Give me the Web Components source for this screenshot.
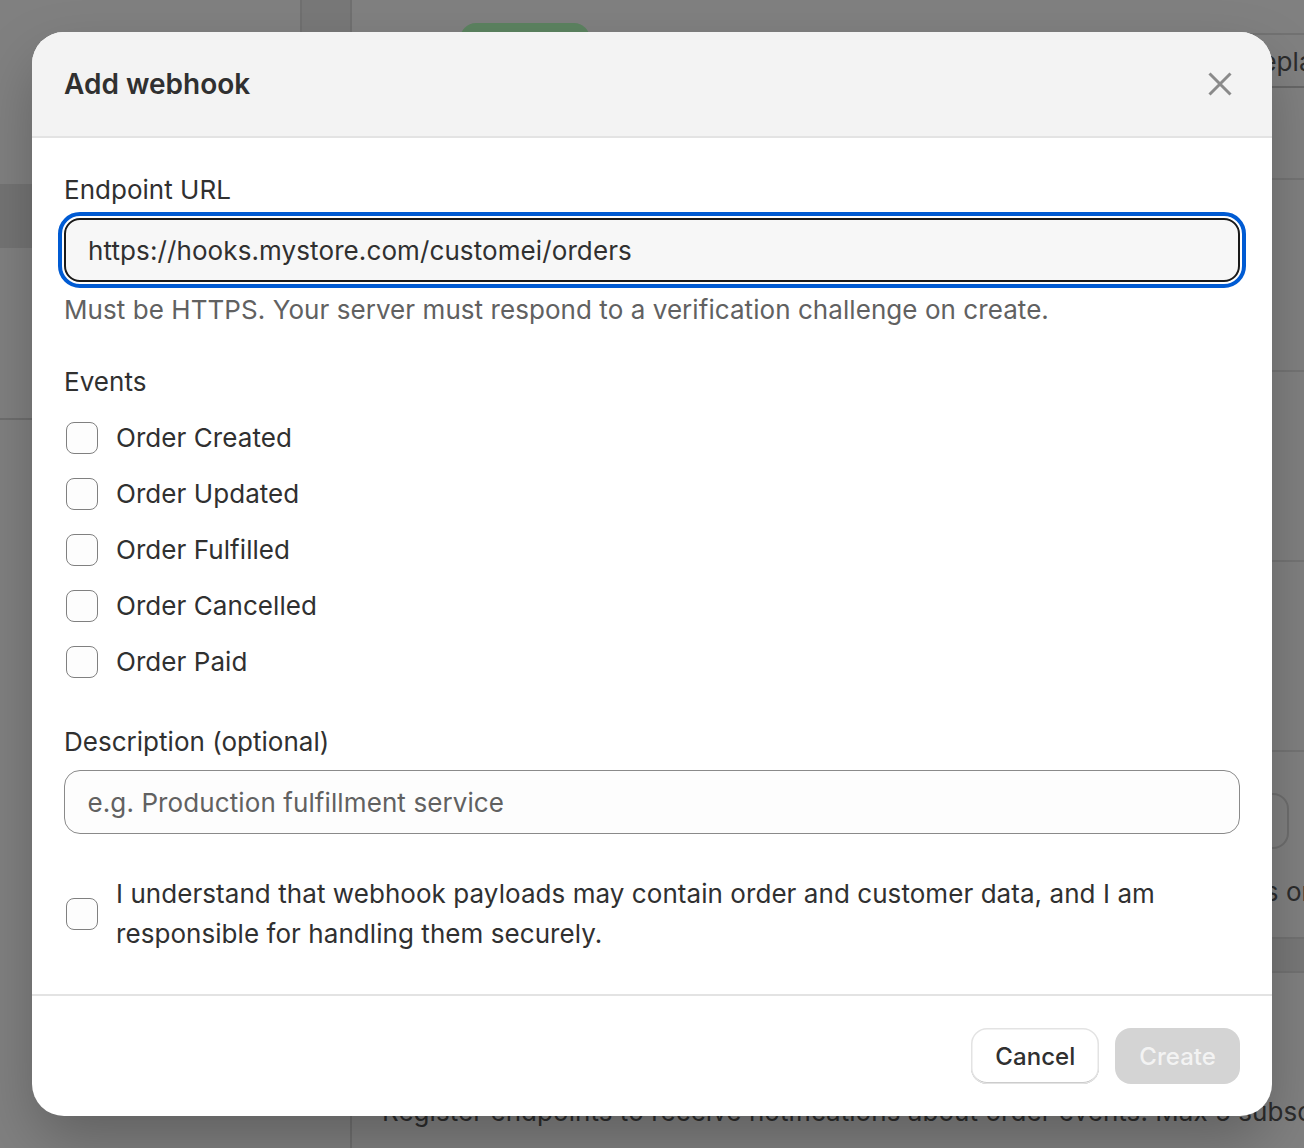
<!DOCTYPE html>
<html><head><meta charset="utf-8"><style>
html,body{margin:0;padding:0;width:1304px;height:1148px;overflow:hidden;background:#808080}
body{font-family:Inter,"Liberation Sans",sans-serif}
</style></head><body>
<app-backdrop>
  <span slot="top">Replace</span>
  <span slot="note">Events on</span>
  <span slot="desc">Register endpoints to receive notifications about order events. Max 5 subscriptions.</span>
</app-backdrop>
<modal-dialog heading="Add webhook">
  <form-field label="Endpoint URL" value="https://hooks.mystore.com/customei/orders" focused hint="Must be HTTPS. Your server must respond to a verification challenge on create."></form-field>
  <check-group label="Events">
    <check-row>Order Created</check-row>
    <check-row>Order Updated</check-row>
    <check-row>Order Fulfilled</check-row>
    <check-row>Order Cancelled</check-row>
    <check-row>Order Paid</check-row>
  </check-group>
  <form-field label="Description (optional)" placeholder="e.g. Production fulfillment service"></form-field>
  <check-row wide>I understand that webhook payloads may contain order and customer data, and I am responsible for handling them securely.</check-row>
  <ui-button slot="footer">Cancel</ui-button>
  <ui-button slot="footer" disabled>Create</ui-button>
</modal-dialog>
<script>
function def(name, html, cb){
  const t=document.createElement('template');t.innerHTML=html;
  customElements.define(name,class extends HTMLElement{
    constructor(){super();this.attachShadow({mode:'open'}).appendChild(t.content.cloneNode(true));}
    connectedCallback(){cb&&cb(this,this.shadowRoot);}
  });
}
def('app-backdrop',`<style>
:host{display:grid;grid-template-columns:352px 1fr;width:1304px;height:1148px;background:#808080;color:#2c2c2c;font:26px/40px Inter,"Liberation Sans",sans-serif;letter-spacing:.05px;position:relative;overflow:hidden}
.side{position:relative;border-right:2px solid #707070;box-sizing:border-box}
.rail{position:absolute;left:300px;top:0;width:50px;height:100px;background:#787878;border-left:2px solid #707070;box-sizing:border-box}
.side .active{width:300px;height:64px;margin-top:184px;background:#747474}
.side .rule{height:2px;margin-top:170px;background:#6e6e6e}
.main{display:flex;flex-direction:column;position:relative}
.badge{width:130px;height:40px;border-radius:16px;background:#5c8360;margin:23px 0 0 108px}
.tab{position:absolute;right:0;left:800px;top:33px;height:55px;border-top:2px solid #727272;border-bottom:2px solid #666;white-space:nowrap;display:flex;align-items:center;box-sizing:border-box;padding-top:3px}
.tab ::slotted(*){margin-left:93px}
.note{position:absolute;left:844px;top:872px;white-space:nowrap}
.desc{position:absolute;left:30px;top:1092px;white-space:nowrap}
.ghost{position:absolute;left:873px;top:793px;width:60px;height:52px;border:2px solid #6e6e6e;border-radius:16px}
.l{position:absolute;left:0;right:0;height:2px;background:#747474}
.band{position:absolute;left:0;right:0;top:937px;height:32px;background:#787878;border-top:2px solid #727272;border-bottom:2px solid #727272}
</style>
<div class="side"><div class="rail"></div><div class="active"></div><div class="rule"></div></div>
<div class="main">
  <div class="badge"></div>
  <div class="tab"><slot name="top"></slot></div>
  <div class="l" style="top:178px"></div>
  <div class="l" style="top:370px"></div>
  <div class="l" style="top:560px"></div>
  <div class="l" style="top:750px"></div>
  <div class="ghost"></div>
  <div class="note"><slot name="note"></slot></div>
  <div class="band"></div>
  <div class="desc"><slot name="desc"></slot></div>
</div>`);
def('modal-dialog',`<style>
:host{position:absolute;left:32px;top:32px;width:1240px;height:1084px;background:#fff;border-radius:32px;overflow:hidden;display:flex;flex-direction:column;color:#303030;font:26px/40px Inter,"Liberation Sans",sans-serif;letter-spacing:.06px;box-sizing:border-box;box-shadow:0 26px 60px -4px rgba(0,0,0,.26)}
header{height:106px;box-sizing:border-box;background:#f3f3f3;border-bottom:2px solid #e3e3e3;display:flex;align-items:center;justify-content:space-between;padding:0 40px 0 32px;flex:none}
h2{margin:0;font-size:28px;line-height:40px;font-weight:640;letter-spacing:0}
svg{display:block}
.body{flex:1;padding:32px 32px 0;display:flex;flex-direction:column;gap:32px}
footer{height:122px;flex:none;border-top:2px solid #e3e3e3;box-sizing:border-box;padding:32px;display:flex;justify-content:flex-end;gap:16px}
</style>
<header><h2 id="h"></h2><svg width="24" height="24" viewBox="0 0 24 24" fill="none" stroke="#8a8a8a" stroke-width="3"><path d="M1.5 1.5 22.5 22.5M22.5 1.5 1.5 22.5"/></svg></header>
<div class="body"><slot></slot></div>
<footer><slot name="footer"></slot></footer>`,(el,s)=>{s.getElementById('h').textContent=el.getAttribute('heading');});
def('form-field',`<style>
:host{display:block}
label{display:block;font-size:26px;line-height:40px;margin-bottom:8px;letter-spacing:.02px}
.box{height:64px;box-sizing:border-box;border:1.5px solid #8a8a8a;border-radius:16px;background:#fdfdfd;padding:1px 22.5px 0;display:flex;align-items:center;font-size:26px;letter-spacing:.1px;color:#616161}
:host([focused]) .box{background:#f7f7f7;border:2px solid #1a1a1a;color:#303030;padding:1px 22px 0;outline:4px solid #005bd3;outline-offset:2px}
.hint{color:#616161;font-size:26px;line-height:40px;margin-top:8px}
</style><label id="l"></label><div class="box" id="b"></div><div class="hint" id="h"></div>`,(el,s)=>{
 s.getElementById('l').textContent=el.getAttribute('label');
 s.getElementById('b').textContent=el.getAttribute('value')||el.getAttribute('placeholder');
 const h=el.getAttribute('hint');const n=s.getElementById('h');if(h)n.textContent=h;else n.remove();
});
def('check-group',`<style>
:host{display:flex;flex-direction:column;gap:16px;padding-bottom:8px}
.t{font-size:26px;line-height:40px}
</style><div class="t" id="t"></div><slot></slot>`,(el,s)=>{s.getElementById('t').textContent=el.getAttribute('label');});
def('check-row',`<style>
:host{display:flex;align-items:center;gap:18px;font-size:26px;line-height:40px;padding-left:2px}
:host([wide]){margin-top:8px}
.c{flex:none;width:32px;height:32px;box-sizing:border-box;border:1.5px solid #808080;border-radius:8px;background:#fdfdfd}
</style><span class="c"></span><span><slot></slot></span>`);
def('ui-button',`<style>
:host{display:flex;align-items:center;justify-content:center;height:56px;box-sizing:border-box;padding:1px 24px 0;border-radius:16px;font-size:24px;font-weight:550;letter-spacing:.05px;background:#fff;color:#303030;box-shadow:inset 0 0 0 1.5px #e3e3e3,inset 0 -2px 0 #b5b5b5}
:host([disabled]){background:#d4d4d4;color:#f3f3f3;box-shadow:none}
</style><slot></slot>`);
</script>
</body></html>
